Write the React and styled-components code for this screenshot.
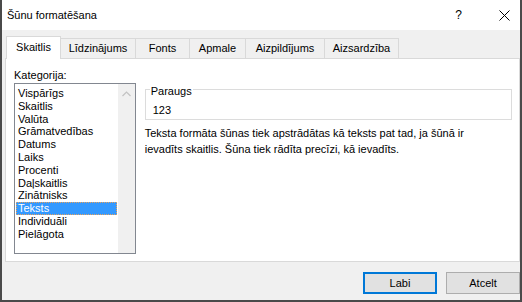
import React from 'react';
import styled, { createGlobalStyle } from 'styled-components';

const GlobalStyle = createGlobalStyle`
  html, body {
    margin: 0;
    padding: 0;
    background: #ffffff;
  }
  body {
    font-family: "Liberation Sans", Arial, sans-serif;
    font-size: 11px;
    color: #000;
  }
`;

const Dialog = styled.div`
  width: 522px;
  height: 302px;
  box-sizing: border-box;
  border-left: 2px solid #4a4a4a;
  border-right: 2px solid #4a4a4a;
  border-bottom: 2px solid #4a4a4a;
  background: #f0f0f0;
  display: flex;
  flex-direction: column;
  overflow: hidden;
`;

const TitleBar = styled.div`
  height: 30px;
  flex: none;
  background: #fff;
  display: flex;
  align-items: center;
  padding-left: 5px;
`;

const Title = styled.div`
  flex: 1;
  font-size: 11px;
`;

const HelpMark = styled.span`
  font-size: 12px;
  margin-right: 37px;
`;

const CloseIcon = styled.svg`
  width: 11px;
  height: 11px;
  margin-right: 10px;
`;

const TabRow = styled.div`
  height: 28px;
  flex: none;
  display: flex;
  align-items: flex-end;
  padding-left: 4px;
`;

const Tab = styled.div`
  box-sizing: border-box;
  width: ${(p) => p.$w}px;
  height: ${(p) => (p.$active ? 23 : 20)}px;
  margin-left: -1px;
  margin-bottom: ${(p) => (p.$active ? -1 : 0)}px;
  border: 1px solid #d9d9d9;
  border-bottom: none;
  background: ${(p) => (p.$active ? '#fff' : '#f0f0f0')};
  position: relative;
  z-index: ${(p) => (p.$active ? 2 : 1)};
  display: flex;
  align-items: center;
  justify-content: center;
  padding-bottom: ${(p) => (p.$active ? 3 : 1)}px;
  &:first-child {
    margin-left: 0;
  }
`;

const Panel = styled.div`
  flex: none;
  height: 204px;
  box-sizing: border-box;
  margin-left: 3px;
  background: #fff;
  border: 1px solid #d9d9d9;
  padding: 8px 7px 0 8px;
`;

const FieldLabel = styled.div`
  line-height: 16px;
`;

const Columns = styled.div`
  display: flex;
  align-items: flex-start;
`;

const ListBox = styled.div`
  width: 122px;
  height: 171px;
  box-sizing: border-box;
  border: 1px solid #828790;
  display: flex;
`;

const Items = styled.div`
  flex: 1;
  padding: 3px 0 0 1px;
`;

const Item = styled.div`
  height: 12.8px;
  line-height: 12.8px;
  padding-left: 2px;
  margin-right: 1px;
  box-sizing: border-box;
  background: ${(p) => (p.$selected ? '#3399ff' : 'transparent')};
  color: ${(p) => (p.$selected ? '#fff' : '#000')};
  outline: ${(p) => (p.$selected ? '1px dotted #e8a25c' : 'none')};
  outline-offset: -1px;
  white-space: nowrap;
`;

const ScrollBar = styled.div`
  width: 17px;
  background: #f0f0f0;
  display: flex;
  justify-content: center;
  padding-top: 7px;
  box-sizing: border-box;
`;

const Chevron = styled.svg`
  width: 9px;
  height: 6px;
`;

const RightColumn = styled.div`
  margin-left: 9px;
  width: 368px;
`;

const Group = styled.div`
  position: relative;
  margin-top: 6px;
  border: 1px solid #dcdcdc;
  padding: 13px 0 2px 7px;
`;

const Legend = styled.span`
  position: absolute;
  top: -6px;
  left: 4px;
  padding: 0 1px;
  line-height: 14px;
  background: #fff;
`;

const SampleValue = styled.div`
  line-height: 14px;
`;

const Description = styled.p`
  margin: 5px 0 0 0;
  line-height: 16px;
`;

const ButtonBar = styled.div`
  display: flex;
  justify-content: flex-end;
  gap: 9px;
  padding-top: 10px;
`;

const Button = styled.button`
  width: 74px;
  height: 22px;
  box-sizing: border-box;
  font-family: inherit;
  font-size: 11px;
  color: #000;
  background: #e1e1e1;
  border: 1px solid ${(p) => (p.$default ? '#0078d7' : '#adadad')};
  box-shadow: ${(p) => (p.$default ? 'inset 0 0 0 1px #0078d7' : 'none')};
  padding: 0;
`;

const tabs = [
  { label: 'Skaitlis', w: 55 },
  { label: 'Līdzinājums', w: 76 },
  { label: 'Fonts', w: 55 },
  { label: 'Apmale', w: 57 },
  { label: 'Aizpildījums', w: 80 },
  { label: 'Aizsardzība', w: 75 },
];

const categories = [
  'Vispārīgs',
  'Skaitlis',
  'Valūta',
  'Grāmatvedības',
  'Datums',
  'Laiks',
  'Procenti',
  'Daļskaitlis',
  'Zinātnisks',
  'Teksts',
  'Individuāli',
  'Pielāgota',
];

const App = () => {
  return (
    <>
      <GlobalStyle />
      <Dialog>
        <TitleBar>
          <Title>Šūnu formatēšana</Title>
          <HelpMark>?</HelpMark>
          <CloseIcon viewBox="0 0 11 11">
            <path d="M0.5 0.5 L10.5 10.5 M10.5 0.5 L0.5 10.5" stroke="#000" strokeWidth="1" fill="none" />
          </CloseIcon>
        </TitleBar>

        <TabRow>
          {tabs.map((t, i) => (
            <Tab key={t.label} $w={t.w} $active={i === 0}>
              {t.label}
            </Tab>
          ))}
        </TabRow>

        <Panel>
          <FieldLabel>Kategorija:</FieldLabel>
          <Columns>
            <ListBox>
              <Items>
                {categories.map((c) => (
                  <Item key={c} $selected={c === 'Teksts'}>
                    {c}
                  </Item>
                ))}
              </Items>
              <ScrollBar>
                <Chevron viewBox="0 0 9 6">
                  <path d="M0.5 5 L4.5 1 L8.5 5" stroke="#c2c2c2" strokeWidth="1.2" fill="none" />
                </Chevron>
              </ScrollBar>
            </ListBox>
            <RightColumn>
              <Group>
                <Legend>Paraugs</Legend>
                <SampleValue>123</SampleValue>
              </Group>
              <Description>
                Teksta formāta šūnas tiek apstrādātas kā teksts pat tad, ja šūnā ir
                <br />
                ievadīts skaitlis. Šūna tiek rādīta precīzi, kā ievadīts.
              </Description>
            </RightColumn>
          </Columns>
        </Panel>

        <ButtonBar>
          <Button $default>Labi</Button>
          <Button>Atcelt</Button>
        </ButtonBar>
      </Dialog>
    </>
  );
};

export default App;
